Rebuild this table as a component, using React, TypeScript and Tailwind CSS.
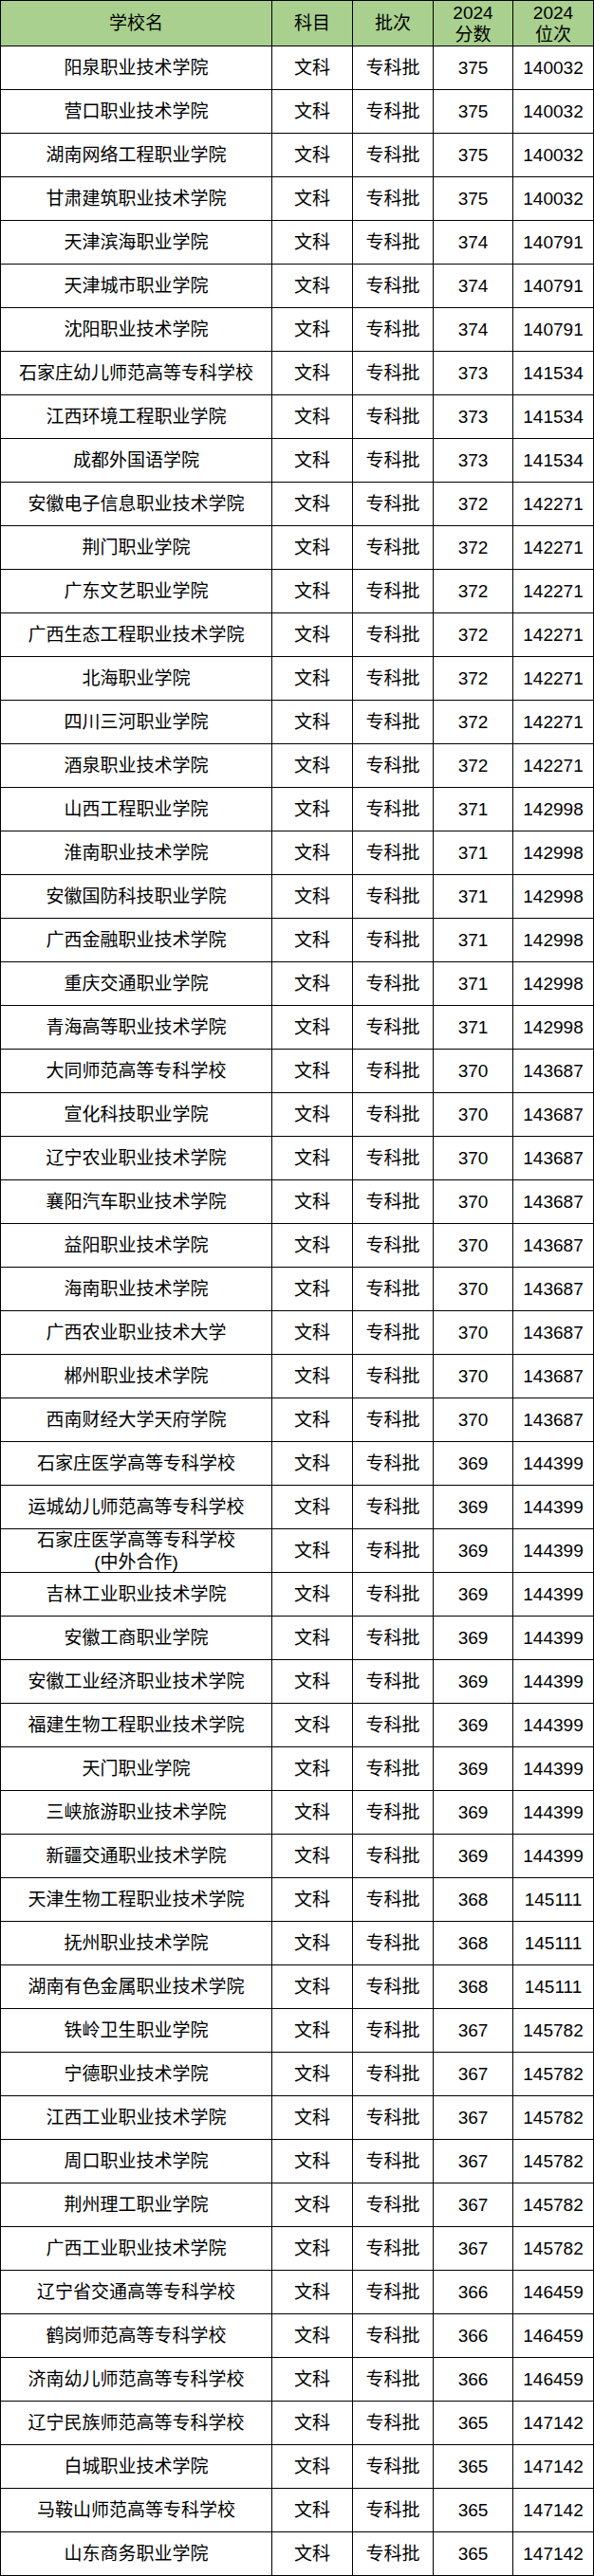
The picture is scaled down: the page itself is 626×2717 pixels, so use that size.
import React from "react";

type Row = [string, number, number];

const rows: Row[] = [
  ["阳泉职业技术学院", 375, 140032],
  ["营口职业技术学院", 375, 140032],
  ["湖南网络工程职业学院", 375, 140032],
  ["甘肃建筑职业技术学院", 375, 140032],
  ["天津滨海职业学院", 374, 140791],
  ["天津城市职业学院", 374, 140791],
  ["沈阳职业技术学院", 374, 140791],
  ["石家庄幼儿师范高等专科学校", 373, 141534],
  ["江西环境工程职业学院", 373, 141534],
  ["成都外国语学院", 373, 141534],
  ["安徽电子信息职业技术学院", 372, 142271],
  ["荆门职业学院", 372, 142271],
  ["广东文艺职业学院", 372, 142271],
  ["广西生态工程职业技术学院", 372, 142271],
  ["北海职业学院", 372, 142271],
  ["四川三河职业学院", 372, 142271],
  ["酒泉职业技术学院", 372, 142271],
  ["山西工程职业学院", 371, 142998],
  ["淮南职业技术学院", 371, 142998],
  ["安徽国防科技职业学院", 371, 142998],
  ["广西金融职业技术学院", 371, 142998],
  ["重庆交通职业学院", 371, 142998],
  ["青海高等职业技术学院", 371, 142998],
  ["大同师范高等专科学校", 370, 143687],
  ["宣化科技职业学院", 370, 143687],
  ["辽宁农业职业技术学院", 370, 143687],
  ["襄阳汽车职业技术学院", 370, 143687],
  ["益阳职业技术学院", 370, 143687],
  ["海南职业技术学院", 370, 143687],
  ["广西农业职业技术大学", 370, 143687],
  ["郴州职业技术学院", 370, 143687],
  ["西南财经大学天府学院", 370, 143687],
  ["石家庄医学高等专科学校", 369, 144399],
  ["运城幼儿师范高等专科学校", 369, 144399],
  ["石家庄医学高等专科学校\n(中外合作)", 369, 144399],
  ["吉林工业职业技术学院", 369, 144399],
  ["安徽工商职业学院", 369, 144399],
  ["安徽工业经济职业技术学院", 369, 144399],
  ["福建生物工程职业技术学院", 369, 144399],
  ["天门职业学院", 369, 144399],
  ["三峡旅游职业技术学院", 369, 144399],
  ["新疆交通职业技术学院", 369, 144399],
  ["天津生物工程职业技术学院", 368, 145111],
  ["抚州职业技术学院", 368, 145111],
  ["湖南有色金属职业技术学院", 368, 145111],
  ["铁岭卫生职业学院", 367, 145782],
  ["宁德职业技术学院", 367, 145782],
  ["江西工业职业技术学院", 367, 145782],
  ["周口职业技术学院", 367, 145782],
  ["荆州理工职业学院", 367, 145782],
  ["广西工业职业技术学院", 367, 145782],
  ["辽宁省交通高等专科学校", 366, 146459],
  ["鹤岗师范高等专科学校", 366, 146459],
  ["济南幼儿师范高等专科学校", 366, 146459],
  ["辽宁民族师范高等专科学校", 365, 147142],
  ["白城职业技术学院", 365, 147142],
  ["马鞍山师范高等专科学校", 365, 147142],
  ["山东商务职业学院", 365, 147142],
];

const cell =
  "border-l border-t border-black flex items-center justify-center text-center overflow-hidden whitespace-pre-line leading-[23px]";

export default function App() {
  return (
    <div
      className="w-[626px] bg-white text-black text-[19px]"
      style={{ fontFamily: '"Liberation Sans", "Noto Sans CJK SC", sans-serif' }}
    >
      <div className="border-r border-b border-black">
        {/* header */}
        <div className="grid grid-cols-[286px_85px_85px_84px_85px] h-[48px] bg-[#a9d08e]">
          <div className={cell}>学校名</div>
          <div className={cell}>科目</div>
          <div className={cell}>批次</div>
          <div className={cell}>{"2024\n分数"}</div>
          <div className={cell}>{"2024\n位次"}</div>
        </div>

        {rows.map(([name, score, rank], i) => (
          <div key={i} className="grid grid-cols-[286px_85px_85px_84px_85px] h-[46px]">
            <div className={cell}>{name}</div>
            <div className={cell}>文科</div>
            <div className={cell}>专科批</div>
            <div className={cell}>{score}</div>
            <div className={cell}>{rank}</div>
          </div>
        ))}
      </div>
    </div>
  );
}
